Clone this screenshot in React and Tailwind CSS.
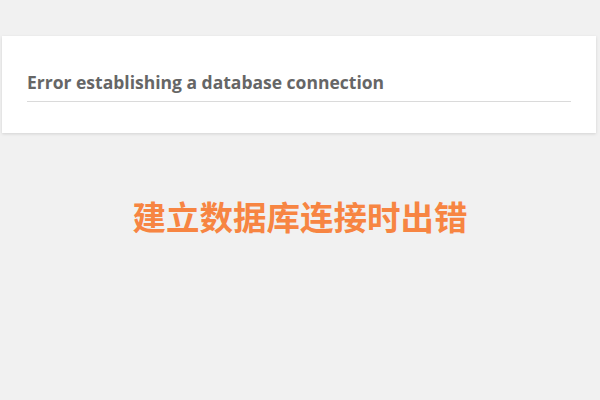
export default function App() {
  return (
    <div className="min-h-screen w-[600px] h-[400px] bg-[#f1f1f1] pt-[36px] font-['Open_Sans','Liberation_Sans',sans-serif]">
      <div className="mx-[2px] w-[594px] bg-white shadow-[0_1px_3px_rgba(0,0,0,0.13)] px-[25px] pt-[34px] pb-[31px]">
        <h1 className="border-b border-[#dadada] pb-[7px] text-[17.5px] leading-[24px] font-bold text-[#666]">
          Error establishing a database connection
        </h1>
      </div>
      <p className="mt-[63px] text-center text-[33.5px] leading-[40px] font-bold text-[#f78542] font-['Noto_Sans_CJK_SC',sans-serif]">
        建立数据库连接时出错
      </p>
    </div>
  );
}
